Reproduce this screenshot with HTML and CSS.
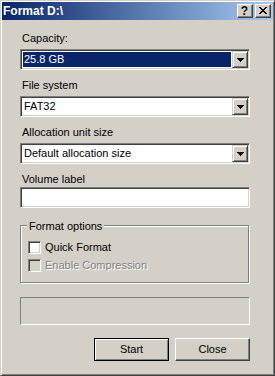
FILE: index.html
```html
<!DOCTYPE html>
<html>
  <head>
    <title>Format D:\</title>
    <meta charset="utf-8">
    <link rel="stylesheet" href="styles.css">
  </head>
  <body>
    <div class="window">
      <div class="titlebar">
        <span class="title">Format D:\</span>
        <div class="caption-buttons">
          <div class="cbtn help">?</div>
          <div class="cbtn">
            <svg width="8" height="7" viewBox="0 0 8 7" shape-rendering="crispEdges">
              <path d="M0 0h2v1h1v1h2v-1h1v-1h2v1h-1v1h-1v1h-1v1h1v1h1v1h1v1h-2v-1h-1v-1h-2v1h-1v1h-2v-1h1v-1h1v-1h1v-1h-1v-1h-1v-1h-1z" fill="#000"/>
            </svg>
          </div>
        </div>
      </div>

      <div class="content">
        <div class="label first">Capacity:</div>
        <div class="combo">
          <div class="combo-field"><span class="combo-text selected">25.8 GB</span></div>
          <div class="drop"><svg width="7" height="4" viewBox="0 0 7 4" shape-rendering="crispEdges"><path d="M0 0h7v1h-1v1h-1v1h-1v1h-1v-1h-1v-1h-1v-1h-1z" fill="#000"/></svg></div>
        </div>

        <div class="label">File system</div>
        <div class="combo">
          <div class="combo-field"><span class="combo-text">FAT32</span></div>
          <div class="drop"><svg width="7" height="4" viewBox="0 0 7 4" shape-rendering="crispEdges"><path d="M0 0h7v1h-1v1h-1v1h-1v1h-1v-1h-1v-1h-1v-1h-1z" fill="#000"/></svg></div>
        </div>

        <div class="label">Allocation unit size</div>
        <div class="combo">
          <div class="combo-field"><span class="combo-text">Default allocation size</span></div>
          <div class="drop"><svg width="7" height="4" viewBox="0 0 7 4" shape-rendering="crispEdges"><path d="M0 0h7v1h-1v1h-1v1h-1v1h-1v-1h-1v-1h-1v-1h-1z" fill="#000"/></svg></div>
        </div>

        <div class="label tight">Volume label</div>
        <div class="textbox"></div>

        <div class="group">
          <span class="legend">Format options</span>
          <div class="check-row">
            <div class="checkbox"></div>
            <span>Quick Format</span>
          </div>
          <div class="check-row disabled">
            <div class="checkbox"></div>
            <span>Enable Compression</span>
          </div>
        </div>

        <div class="progress"></div>

        <div class="buttons">
          <div class="btn default">Start</div>
          <div class="btn">Close</div>
        </div>
      </div>
    </div>
  </body>
</html>
```

FILE: styles.css
```css
* {
  box-sizing: border-box;
}

body {
  margin: 0;
  font-family: "Liberation Sans", Arial, sans-serif;
  font-size: 11px;
  color: #000;
}

.window {
  width: 275px;
  height: 376px;
  padding: 1px;
  background-color: #D4D0C8;
  border: 1px solid;
  border-color: #D4D0C8 #404040 #404040 #D4D0C8;
  box-shadow: inset 1px 1px #fff, inset -1px -1px #808080;
}

.titlebar {
  height: 18px;
  display: flex;
  align-items: center;
  justify-content: space-between;
  background: linear-gradient(to right, #0A246A, #A6CAF0);
}

.title {
  padding-left: 1px;
  color: #fff;
  font-weight: bold;
  font-size: 12px;
  line-height: 18px;
}

.caption-buttons {
  display: flex;
  gap: 2px;
  margin-right: 2px;
}

.cbtn {
  width: 16px;
  height: 14px;
  display: flex;
  align-items: center;
  justify-content: center;
  padding: 0 1px 1px 0;
  background-color: #D4D0C8;
  border: 1px solid;
  border-color: #fff #404040 #404040 #fff;
  box-shadow: inset -1px -1px #808080;
}

.help {
  font-weight: bold;
  font-size: 12px;
  line-height: 12px;
}

.content {
  padding-left: 18px;
}

.label {
  height: 13px;
  line-height: 13px;
  padding-left: 2px;
  margin-top: 9px;
  margin-bottom: 4px;
}

.label.first {
  margin-top: 12px;
}

.label.tight {
  margin-bottom: 1px;
}

.combo,
.textbox {
  width: 230px;
  height: 21px;
  display: flex;
  background-color: #fff;
  border: 1px solid;
  border-color: #808080 #fff #fff #808080;
  box-shadow: inset 1px 1px #404040, inset -1px -1px #D4D0C8;
}

.combo {
  padding: 1px;
}

.combo-field {
  flex: 1;
  padding: 1px;
  display: flex;
}

.combo-text {
  flex: 1;
  padding-left: 1px;
  line-height: 15px;
}

.combo-text.selected {
  background-color: #0A246A;
  color: #fff;
}

.drop {
  width: 16px;
  height: 17px;
  display: flex;
  align-items: center;
  justify-content: center;
  background-color: #D4D0C8;
  border: 1px solid;
  border-color: #D4D0C8 #404040 #404040 #D4D0C8;
  box-shadow: inset 1px 1px #fff, inset -1px -1px #808080;
}

.group {
  position: relative;
  width: 229px;
  height: 58px;
  margin-top: 17px;
  padding: 15px 0 0 7px;
  border: 1px solid #808080;
  box-shadow: inset 1px 1px #fff, 1px 1px #fff;
}

.legend {
  position: absolute;
  left: 6px;
  top: -6px;
  padding: 0 2px;
  line-height: 13px;
  background-color: #D4D0C8;
}

.check-row {
  display: flex;
  align-items: center;
  gap: 4px;
  height: 13px;
  line-height: 13px;
  margin-bottom: 5px;
}

.checkbox {
  width: 13px;
  height: 13px;
  background-color: #fff;
  border: 1px solid;
  border-color: #808080 #fff #fff #808080;
  box-shadow: inset 1px 1px #404040, inset -1px -1px #D4D0C8;
}

.disabled {
  color: #808080;
  text-shadow: 1px 1px #fff;
}

.disabled .checkbox {
  background-color: #D4D0C8;
}

.progress {
  width: 230px;
  height: 28px;
  margin-top: 14px;
  border: 1px solid;
  border-color: #808080 #fff #fff #808080;
}

.buttons {
  width: 230px;
  margin-top: 13px;
  display: flex;
  justify-content: flex-end;
  gap: 6px;
}

.btn {
  width: 75px;
  height: 23px;
  line-height: 21px;
  text-align: center;
  border: 1px solid;
  border-color: #fff #404040 #404040 #fff;
  box-shadow: inset -1px -1px #808080;
}

.btn.default {
  border-color: #000;
  box-shadow: inset 1px 1px #fff, inset -1px -1px #808080;
}
```
